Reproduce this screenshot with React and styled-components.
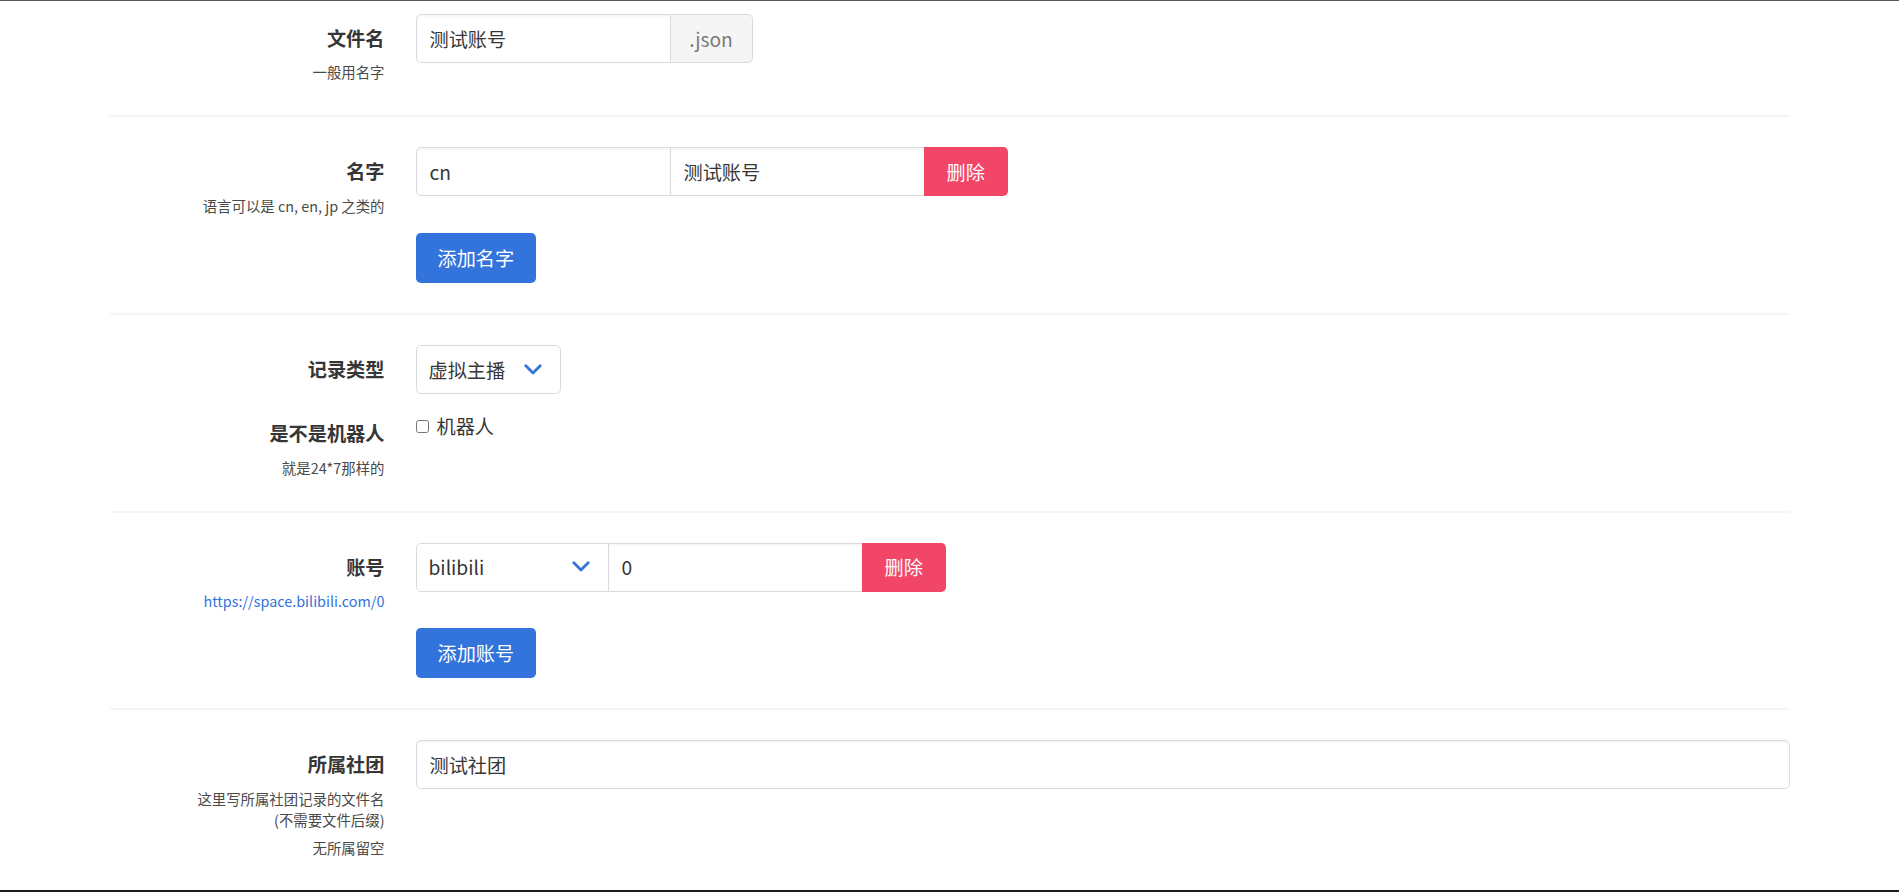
import React from "react";
import styled, {createGlobalStyle, css} from "styled-components";

const GlobalStyle = createGlobalStyle`
  html, body {
    margin: 0;
    padding: 0;
    background: #ffffff;
  }
  body {
    font-family: "Noto Sans CJK SC", "Noto Sans", sans-serif;
    color: #4a4a4a;
  }
  * {
    box-sizing: border-box;
  }
`;

const radiusFor = (pos) => {
	if (pos === "first") return css`border-radius: 4.8px 0 0 4.8px;`;
	if (pos === "middle") return css`border-radius: 0;`;
	if (pos === "last") return css`border-radius: 0 4.8px 4.8px 0;`;
	return css`border-radius: 4.8px;`;
};

const ChevronDown = () => (
	<svg width="18" height="11" viewBox="0 0 18 11" fill="none">
		<polyline points="1.8,1.8 9,9 16.2,1.8" stroke="#3273dc" strokeWidth="2.8" strokeLinecap="round" strokeLinejoin="round"/>
	</svg>
);

const App = () => {
	return (
		<Frame>
			<GlobalStyle/>
			<Container>
				<Field>
					<FieldLabel>
						<Label>文件名</Label>
						<Help>一般用名字</Help>
					</FieldLabel>
					<FieldBody>
						<Addons>
							<TextInput $pos="first" $width={255} defaultValue="测试账号"/>
							<StaticAddon $pos="last">.json</StaticAddon>
						</Addons>
					</FieldBody>
				</Field>

				<Divider/>

				<Field>
					<FieldLabel>
						<Label>名字</Label>
						<Help>语言可以是 cn, en, jp 之类的</Help>
					</FieldLabel>
					<FieldBody>
						<Addons>
							<TextInput $pos="first" $width={255} defaultValue="cn"/>
							<TextInput $pos="middle" $width={255} defaultValue="测试账号"/>
							<Button $pos="last" $variant="danger" type="button">删除</Button>
						</Addons>
					</FieldBody>
				</Field>
				<Field>
					<div/>
					<FieldBody>
						<Button $variant="link" $tall type="button">添加名字</Button>
					</FieldBody>
				</Field>

				<Divider/>

				<Field>
					<FieldLabel>
						<Label>记录类型</Label>
					</FieldLabel>
					<FieldBody>
						<SelectBox $width={145}>
							<NativeSelect defaultValue="vtuber">
								<option value="vtuber">虚拟主播</option>
							</NativeSelect>
							<Arrow><ChevronDown/></Arrow>
						</SelectBox>
					</FieldBody>
				</Field>
				<Field>
					<FieldLabel>
						<Label>是不是机器人</Label>
						<Help>就是24*7那样的</Help>
					</FieldLabel>
					<FieldBody>
						<CheckLabel>
							<input type="checkbox"/>
							机器人
						</CheckLabel>
					</FieldBody>
				</Field>

				<Divider/>

				<Field>
					<FieldLabel>
						<Label>账号</Label>
						<Help $link>https://space.bilibili.com/0</Help>
					</FieldLabel>
					<FieldBody>
						<Addons>
							<SelectBox $pos="first" $width={193}>
								<NativeSelect defaultValue="bilibili">
									<option value="bilibili">bilibili</option>
								</NativeSelect>
								<Arrow><ChevronDown/></Arrow>
							</SelectBox>
							<TextInput $pos="middle" $width={255} defaultValue="0"/>
							<Button $pos="last" $variant="danger" type="button">删除</Button>
						</Addons>
					</FieldBody>
				</Field>
				<Field>
					<div/>
					<FieldBody>
						<Button $variant="link" $tall type="button">添加账号</Button>
					</FieldBody>
				</Field>

				<Divider/>

				<Field>
					<FieldLabel>
						<Label>所属社团</Label>
						<Help>这里写所属社团记录的文件名<br/>(不需要文件后缀)</Help>
						<Help>无所属留空</Help>
					</FieldLabel>
					<FieldBody>
						<TextInput $full defaultValue="测试社团"/>
					</FieldBody>
				</Field>
			</Container>
		</Frame>
	);
};

const Frame = styled.div`
  height: 100vh;
  overflow: hidden;
  border-top: 1px solid #5a5a5a;
  border-bottom: 2px solid #1c1c1c;
  padding-top: 13px;
`;

const Container = styled.div`
  max-width: 1680px;
  margin: 0 auto;
`;

const Divider = styled.hr`
  border: none;
  height: 2px;
  background-color: #f5f5f5;
  margin: 30px 0;
`;

const Field = styled.div`
  display: grid;
  grid-template-columns: 275px 1fr;
  column-gap: 31px;
  align-items: start;

  & + & {
    margin-top: 14.4px;
  }
`;

const FieldLabel = styled.div`
  text-align: right;
  padding: 10px 0 2.6px;
`;

const Label = styled.label`
  display: block;
  color: #363636;
  font-size: 19.2px;
  font-weight: 700;
  line-height: 28.8px;
  margin-bottom: 8.4px;
`;

const Help = styled.p`
  margin: 0;
  font-size: 14.4px;
  line-height: 21.6px;
  color: ${(props) => (props.$link ? "#3273dc" : "#4a4a4a")};

  & + & {
    margin-top: 6px;
  }
`;

const FieldBody = styled.div`
  display: flex;
  align-items: flex-start;
`;

const Addons = styled.div`
  display: flex;
  align-items: stretch;
`;

const TextInput = styled.input`
  height: 49px;
  width: ${(props) => (props.$full ? "100%" : `${props.$width}px`)};
  padding: 0 13px;
  border: 1px solid #dbdbdb;
  ${(props) => radiusFor(props.$pos)};
  box-shadow: inset 0 1.2px 2.4px rgba(10, 10, 10, 0.05);
  background-color: #ffffff;
  color: #363636;
  font-family: "Noto Sans CJK SC", "Noto Sans", sans-serif;
  font-size: 19.2px;
  outline: none;

  & + * {
    margin-left: -1px;
  }
`;

const StaticAddon = styled.span`
  display: flex;
  align-items: center;
  justify-content: center;
  width: 83px;
  height: 49px;
  border: 1px solid #dbdbdb;
  ${(props) => radiusFor(props.$pos)};
  background-color: #f5f5f5;
  color: #7a7a7a;
  font-size: 19.2px;
`;

const Button = styled.button`
  height: ${(props) => (props.$tall ? "50px" : "49px")};
  padding: 0 ${(props) => (props.$tall ? "21px" : "22px")};
  border: 1px solid transparent;
  ${(props) => radiusFor(props.$pos)};
  background-color: ${(props) => (props.$variant === "danger" ? "#f14668" : "#3273dc")};
  color: #ffffff;
  font-family: "Noto Sans CJK SC", "Noto Sans", sans-serif;
  font-size: 19.2px;
  white-space: nowrap;
  cursor: pointer;
  position: relative;
  z-index: 1;
`;

const SelectBox = styled.div`
  position: relative;
  width: ${(props) => props.$width}px;
  height: 49px;
  border: 1px solid #dbdbdb;
  ${(props) => radiusFor(props.$pos)};
  background-color: #ffffff;

  & + * {
    margin-left: -1px;
  }
`;

const NativeSelect = styled.select`
  appearance: none;
  width: 100%;
  height: 100%;
  border: none;
  background: transparent;
  padding: 0 40px 0 12px;
  color: #363636;
  font-family: "Noto Sans CJK SC", "Noto Sans", sans-serif;
  font-size: 19.2px;
  outline: none;
`;

const Arrow = styled.span`
  position: absolute;
  right: 18px;
  top: 50%;
  margin-top: -6px;
  display: flex;
  pointer-events: none;
`;

const CheckLabel = styled.label`
  display: flex;
  align-items: center;
  padding-top: 5px;
  color: #363636;
  font-size: 19.2px;
  line-height: 24px;

  input {
    width: 13px;
    height: 13px;
    margin: 0 8px 0 0;
  }
`;

export default App;
